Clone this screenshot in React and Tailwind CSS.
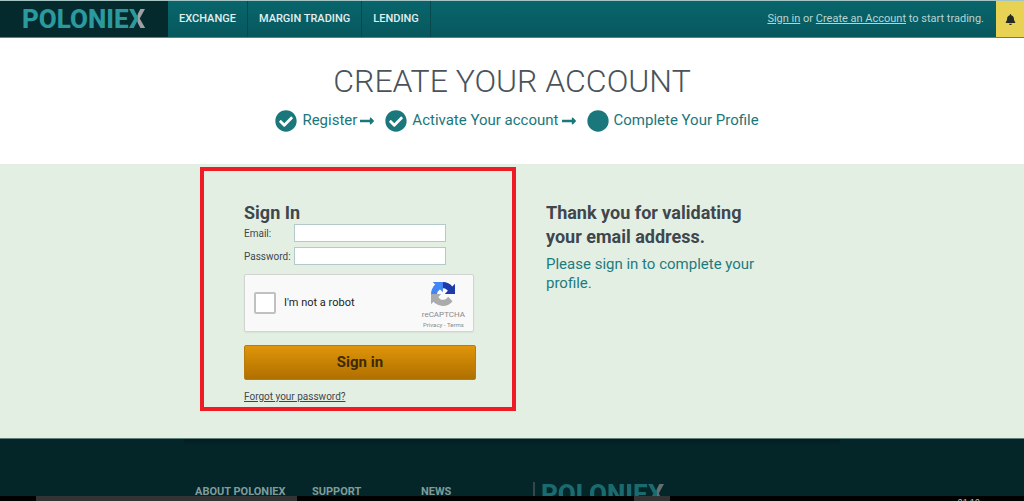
import { FaBell, FaCheckCircle, FaCircle, FaLongArrowAltRight } from "react-icons/fa";

function Logo() {
  return (
    <span className="text-[26px] leading-6 font-extrabold text-[#2a9a9e]">
      POLONIE
      <span className="bg-linear-to-r from-[#2a9a9e] from-55% to-[#a09fa3] to-55% bg-clip-text text-transparent">
        X
      </span>
    </span>
  );
}

function RecaptchaMark() {
  return (
    <svg viewBox="0 0 64 64" className="size-6" aria-hidden="true">
      <path
        fill="#1c3aa9"
        d="M64 31.955l-.033-1.37V4.687l-7.16 7.16C50.948 4.674 42.033.093 32.05.093c-10.4 0-19.622 4.96-25.458 12.64l11.736 11.86a15.55 15.55 0 0 1 4.754-5.334c2.05-1.6 4.952-2.906 8.968-2.906.485 0 .86.057 1.135.163 4.976.393 9.288 3.14 11.828 7.124l-8.307 8.307L64 31.953"
      />
      <path
        fill="#4285f4"
        d="M31.862.094l-1.37.033H4.594l7.16 7.16C4.58 13.147 0 22.06 0 32.046c0 10.4 4.96 19.622 12.64 25.458L24.5 45.768a15.55 15.55 0 0 1-5.334-4.754c-1.6-2.05-2.906-4.952-2.906-8.968 0-.485.057-.86.163-1.135.393-4.976 3.14-9.288 7.124-11.828l8.307 8.307L31.86.095"
      />
      <path
        fill="#ababab"
        d="M.001 32.045l.033 1.37v25.898l7.16-7.16c5.86 7.173 14.774 11.754 24.76 11.754 10.4 0 19.622-4.96 25.458-12.64l-11.736-11.86a15.55 15.55 0 0 1-4.754 5.334c-2.05 1.6-4.952 2.906-8.968 2.906-.485 0-.86-.057-1.135-.163-4.976-.393-9.288-3.14-11.828-7.124l8.307-8.307c-10.522.04-22.4.066-27.295-.005"
      />
    </svg>
  );
}

function Header() {
  return (
    <header className="flex h-[38px] shrink-0 border-t border-b border-t-[#a5c5c5] border-b-[#5f7f82] bg-linear-to-b from-[#08666c] to-[#07585d] text-[11px]">
      <a href="#home" className="flex w-[168px] items-center bg-[#042a2d] pl-[22px]">
        <Logo />
      </a>
      <nav className="flex font-medium text-[#e2eeee]">
        {["EXCHANGE", "MARGIN TRADING", "LENDING"].map((name) => (
          <a
            key={name}
            href={"#" + name.toLowerCase().replace(" ", "-")}
            className="flex items-center border-r border-[#064a4f] px-[11px]"
          >
            {name}
          </a>
        ))}
      </nav>
      <p className="ml-auto self-center pr-3 text-[#b9d3d3]">
        <a href="#signin" className="underline">Sign in</a> or{" "}
        <a href="#create" className="underline">Create an Account</a> to start trading.
      </p>
      <button
        type="button"
        aria-label="Notifications"
        className="flex w-7 items-center justify-center bg-[#e8d254] text-[#252a22]"
      >
        <FaBell className="size-[11px]" />
      </button>
    </header>
  );
}

function Step({ done, last, children }) {
  return (
    <li className="flex items-center">
      {done ? <FaCheckCircle className="size-[22px]" /> : <FaCircle className="size-[22px]" />}
      <span className="pl-[5px]">{children}</span>
      {!last && <FaLongArrowAltRight className="ml-0.5 size-4" />}
    </li>
  );
}

function Field({ id, label, type }) {
  return (
    <div className="flex items-center">
      <label htmlFor={id} className="w-[50px] shrink-0 text-[10px]">
        {label}
      </label>
      <input
        id={id}
        type={type}
        className="h-[18px] w-[152px] border border-[#b4c9ca] bg-white px-1 text-[10px] outline-none"
      />
    </div>
  );
}

function SignInForm() {
  return (
    <form
      className="w-[316px] border-4 border-[#ee1c25] pt-[31px] pr-9 pb-0.5 pl-10"
      onSubmit={(event) => event.preventDefault()}
    >
      <h2 className="text-lg leading-[22px] font-bold text-[#3f474d]">Sign In</h2>
      <div className="flex flex-col gap-[5px]">
        <Field id="email" label="Email:" type="email" />
        <Field id="password" label="Password:" type="password" />
      </div>
      <div className="mt-[9px] mr-0.5 flex h-[58px] items-center justify-between rounded-xs border border-[#d3d3d3] bg-[#f9f9f9] pr-2 pl-[9px] shadow-xs">
        <label className="flex items-center gap-2 text-[11px] text-[#222]">
          <input
            type="checkbox"
            className="size-[22px] appearance-none rounded-xs border-2 border-[#c1c1c1] bg-white"
          />
          I'm not a robot
        </label>
        <div className="flex flex-col items-center pt-[6px] text-[#8a8a8a]">
          <RecaptchaMark />
          <span className="pt-1 text-[8px] leading-[10px]">reCAPTCHA</span>
          <span className="text-[6px] leading-[10px]">
            <a href="#privacy">Privacy</a> - <a href="#terms">Terms</a>
          </span>
        </div>
      </div>
      <button
        type="submit"
        className="mt-[13px] h-[35px] w-full rounded-xs border border-[#b97c0c] bg-linear-to-b from-[#e0950a] to-[#b07000] text-[15px] font-bold text-[#3d2a05]"
      >
        Sign in
      </button>
      <a href="#forgot" className="mt-[9px] block text-[10px] leading-4 underline">
        Forgot your password?
      </a>
    </form>
  );
}

function Footer() {
  return (
    <footer className="min-h-0 flex-1 overflow-hidden border-t border-[#5f7f7b] bg-[#042629]">
      <div className="mx-auto h-full max-w-[656px] bg-linear-to-b from-[#031b1d] to-[#042629] to-10% pl-[11px]">
        <div className="flex items-start pt-[43px] text-[11px] leading-[11px] font-bold text-[#7f9c9c]">
          <a href="#about" className="w-[117px] pt-1">ABOUT POLONIEX</a>
          <a href="#support" className="w-[109px] pt-1">SUPPORT</a>
          <a href="#news" className="w-28 pt-1">NEWS</a>
          <a href="#home" className="border-l-2 border-[#34484c] pl-1.5">
            <span className="opacity-60">
              <Logo />
            </span>
          </a>
        </div>
      </div>
    </footer>
  );
}

function Taskbar() {
  return (
    <div className="flex h-[5px] shrink-0 items-start overflow-hidden bg-black pl-9">
      <div className="h-full w-[261px] bg-[#333]" />
      <div className="ml-[337px] h-full w-9 bg-[#333]" />
      <span className="mr-11 ml-auto pt-[3px] text-[9px] leading-none text-[#c8c8c8]">01:19</span>
    </div>
  );
}

export default function App() {
  return (
    <div className="flex h-screen flex-col overflow-hidden bg-white font-['Roboto','Liberation_Sans',sans-serif] text-[#3f474d]">
      <Header />
      <section className="flex shrink-0 flex-col items-center pt-6 pb-8">
        <h1 className="text-[32px] leading-[38px] font-light text-[#4a525a]">CREATE YOUR ACCOUNT</h1>
        <ol className="mt-[9px] flex items-center gap-[10px] pl-2.5 text-[15px] leading-[23px] text-[#1a777b]">
          <Step done>Register</Step>
          <Step done>Activate Your account</Step>
          <Step last>Complete Your Profile</Step>
        </ol>
      </section>
      <main className="shrink-0 bg-[#e4efe4] pt-[3px] pb-[27px]">
        <div className="mx-auto flex max-w-[656px] gap-[30px] pl-4">
          <SignInForm />
          <section className="w-[220px] pt-[34px]">
            <h2 className="text-lg leading-6 font-bold">Thank you for validating your email address.</h2>
            <p className="mt-1.5 text-[15px] leading-[19px] text-[#1d7b7e]">
              Please sign in to complete your profile.
            </p>
          </section>
        </div>
      </main>
      <Footer />
      <Taskbar />
    </div>
  );
}
